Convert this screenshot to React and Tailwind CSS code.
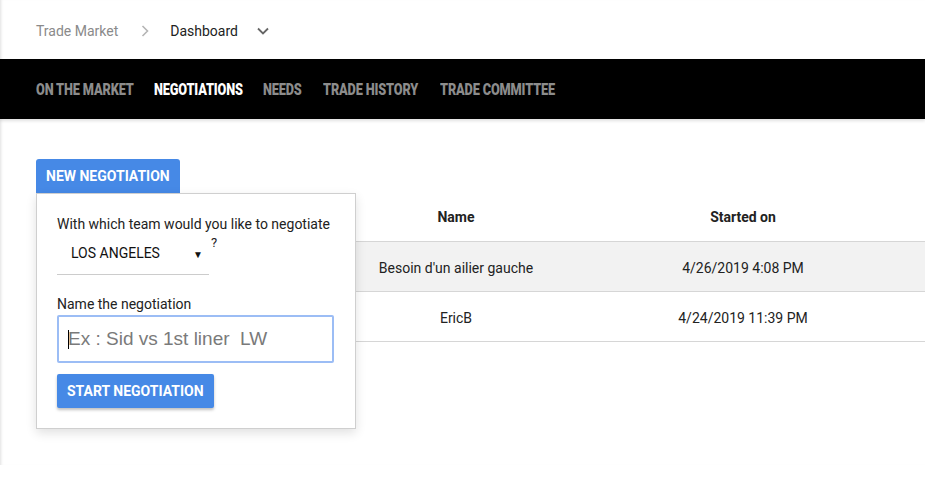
import React from "react";

const navItems = [
  ["ON THE MARKET", "w-[98px]"],
  ["NEGOTIATIONS", "w-[89px]"],
  ["NEEDS", "w-[40px]"],
  ["TRADE HISTORY", "w-[97px]"],
  ["TRADE COMMITTEE", "w-[115px]"],
];

export default function App() {
  const rows = [
    ["Besoin d'un ailier gauche", "4/26/2019 4:08 PM"],
    ["EricB", "4/24/2019 11:39 PM"],
  ];
  return (
    <div className="w-[925px] h-[500px] bg-white overflow-hidden font-['Roboto',sans-serif]">
      <div className="h-[465px] bg-white shadow-[inset_3px_0_3px_-2px_rgba(0,0,0,0.12)]">
        {/* breadcrumb */}
        <div className="h-[59px] flex items-center pl-[36px] pt-[3px] text-[14px]">
          <span className="text-[#8a8a8a]">Trade Market</span>
          <svg className="ml-[22px]" width="10" height="14" viewBox="0 0 10 14">
            <path d="M2.5 2 L7.5 7 L2.5 12" fill="none" stroke="#b5b5b5" strokeWidth="1.6" />
          </svg>
          <span className="ml-[20px] text-[#222]">Dashboard</span>
          <svg className="ml-[18px]" width="14" height="10" viewBox="0 0 14 10">
            <path d="M2 2.5 L7 7.5 L12 2.5" fill="none" stroke="#666" strokeWidth="1.8" />
          </svg>
        </div>
        {/* nav */}
        <div className="h-[60px] bg-black flex items-center pl-[36px] gap-[20px] shadow-[0_2px_3px_rgba(0,0,0,0.12)] relative">
          {navItems.map(([t, w]) => (
            <div key={t} className={`${w} overflow-visible whitespace-nowrap`}>
              <span
                className={`inline-block origin-left scale-x-[0.75] text-[17px] font-black tracking-[-0.2px] pt-[1px] ${t === "NEGOTIATIONS" ? "text-white" : "text-[#8c8c8c]"}`}
              >
                {t}
              </span>
            </div>
          ))}
        </div>
        {/* content */}
        <div className="pt-[40px] pl-[36px] relative">
          <button className="h-[34px] px-[10px] bg-[#4689e6] text-white text-[14px] font-bold rounded-t-[3px] uppercase">
            New negotiation
          </button>
          {/* table */}
          <div className="text-[14px] text-[#222] -mr-[10px]">
            <div className="flex h-[49px] items-center font-bold border-b border-[#d6d6d6]">
              <div className="w-[276px]"></div>
              <div className="w-[288px] text-center">Name</div>
              <div className="w-[286px] text-center">Started on</div>
              <div className="flex-1"></div>
            </div>
            {rows.map((r, i) => (
              <div
                key={i}
                className={`flex h-[50px] items-center pt-[3px] border-b border-[#d6d6d6] ${i === 0 ? "bg-[#f2f2f2]" : "bg-white"}`}
              >
                <div className="w-[276px]"></div>
                <div className="w-[288px] text-center">{r[0]}</div>
                <div className="w-[286px] text-center">{r[1]}</div>
                <div className="flex-1"></div>
              </div>
            ))}
          </div>
          {/* popover */}
          <div className="absolute left-[36px] top-[74px] w-[320px] bg-white border border-[#cfcfcf] shadow-[0_4px_10px_rgba(0,0,0,0.12)] px-[20px] pt-[20px] pb-[20px] text-[14px] text-[#222]">
            <div className="leading-[20px]">With which team would you like to negotiate</div>
            <div className="flex items-start">
              <div className="w-[152px] h-[41px] pb-[1px] border-b border-[#cccccc] flex items-center pl-[14px] pr-[6px] text-[#111]">
                <span className="flex-1">LOS ANGELES</span>
                <span className="text-[10px] mt-[1px]">▼</span>
              </div>
              <span className="ml-[2px] mt-[1px] text-[13px] leading-[16px]">?</span>
            </div>
            <div className="mt-[19px] leading-[20px]">Name the negotiation</div>
            <div className="mt-[1px] h-[48px] w-[277px] border-2 border-[#9cbdf5] rounded-[2px] flex items-center pl-[9px] font-['Liberation_Sans',sans-serif] text-[19px] text-[#7a7a7a]">
              <span className="w-[1px] h-[19px] bg-black mr-[-1px]"></span>
              <span>Ex : Sid vs 1st liner&nbsp;&nbsp;LW</span>
            </div>
            <button className="mt-[11px] h-[34px] px-[10px] bg-[#4689e6] text-white text-[14px] font-bold rounded-[2px] shadow-[0_2px_3px_rgba(0,0,0,0.25)] uppercase">
              Start negotiation
            </button>
          </div>
        </div>
      </div>
    </div>
  );
}
